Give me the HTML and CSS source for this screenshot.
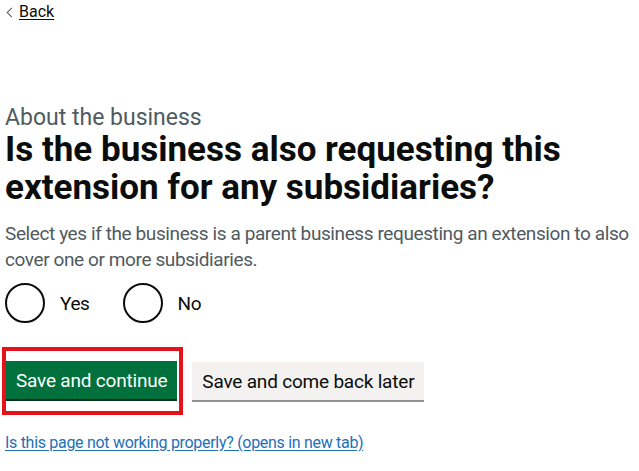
FILE: index.html
```html
<!DOCTYPE html>
<html lang="en">
  <head>
    <meta charset="UTF-8" />
    <meta name="viewport" content="width=device-width, initial-scale=1.0" />
    <title>About the business</title>
    <link rel="stylesheet" href="styles.css">
  </head>
  <body>
    <div class="page">
      <a href="#" class="back-link">Back</a>

      <main class="main">
        <form>
          <fieldset class="fieldset">
            <legend class="legend">
              <span class="caption">About the business</span>
              <h1 class="heading">Is the business also requesting this extension for any subsidiaries?</h1>
            </legend>
            <div class="hint">
              Select yes if the business is a parent business requesting an extension to also cover one or more subsidiaries.
            </div>
            <div class="radios">
              <label class="radio">
                <input type="radio" name="subsidiaries" value="yes" />
                <span class="radio-mark"></span>
                <span class="radio-label">Yes</span>
              </label>
              <label class="radio">
                <input type="radio" name="subsidiaries" value="no" />
                <span class="radio-mark"></span>
                <span class="radio-label">No</span>
              </label>
            </div>
          </fieldset>

          <div class="button-group">
            <div class="highlight">
              <button type="submit" class="button">Save and continue</button>
            </div>
            <button type="button" class="button button-secondary">Save and come back later</button>
          </div>
        </form>

        <p class="report">
          <a href="#" class="link">Is this page not working properly? (opens in new tab)</a>
        </p>
      </main>
    </div>
  </body>
</html>
```

FILE: styles.css
```css
body {
  margin: 0;
  font-family: Roboto, Arial, sans-serif;
  color: #0b0c0c;
  background: #fff;
}

.page {
  padding: 0 5px;
}

.back-link {
  display: inline-block;
  position: relative;
  margin-top: 2px;
  padding-left: 14px;
  font-size: 16px;
  line-height: 20px;
  color: #0b0c0c;
  text-decoration: underline;
  text-underline-offset: 2px;
}
.back-link::before {
  content: "";
  position: absolute;
  left: 3px;
  top: 7px;
  width: 6px;
  height: 6px;
  border-left: 1px solid #505a5f;
  border-bottom: 1px solid #505a5f;
  transform: rotate(45deg);
}

.main {
  padding-top: 82px;
}

.fieldset {
  margin: 0;
  padding: 0;
  border: 0;
}

.legend {
  padding: 0;
}

.caption {
  display: block;
  font-size: 23px;
  line-height: 27px;
  color: #505a5f;
}

.heading {
  margin: 0 0 14px;
  font-size: 35px;
  line-height: 38px;
  font-weight: 700;
}

.hint {
  font-size: 19px;
  line-height: 26px;
  letter-spacing: -0.4px;
  color: #505a5f;
  margin-bottom: 10px;
}

.radios {
  display: flex;
  gap: 18px;
}

.radio {
  display: flex;
  align-items: center;
  cursor: pointer;
}
.radio input {
  position: absolute;
  opacity: 0;
  width: 0;
  height: 0;
}
.radio-mark {
  width: 36px;
  height: 36px;
  border: 2px solid #0b0c0c;
  border-radius: 50%;
}
.radio-label {
  padding: 0 15px;
  font-size: 19px;
  letter-spacing: -0.4px;
}

.button-group {
  display: flex;
  align-items: center;
  gap: 9px;
  margin-top: 24px;
  margin-left: -3px;
}

.highlight {
  border: 4px solid #e3131c;
  padding: 10px 2px 12px 0;
}

.button {
  margin: 0;
  padding: 9px 10px 7px;
  font-family: inherit;
  font-size: 19px;
  line-height: 22px;
  letter-spacing: -0.2px;
  color: #fff;
  background: #00703c;
  border: 0;
  box-shadow: 0 2px 0 #002d18;
  cursor: pointer;
}

.button-secondary {
  color: #0b0c0c;
  background: #f3f2f1;
  box-shadow: 0 2px 0 #929191;
}

.report {
  margin: 18px 0 0;
  font-size: 16px;
  letter-spacing: -0.3px;
}
.link {
  color: #1d70b8;
  text-underline-offset: 2px;
}
```
